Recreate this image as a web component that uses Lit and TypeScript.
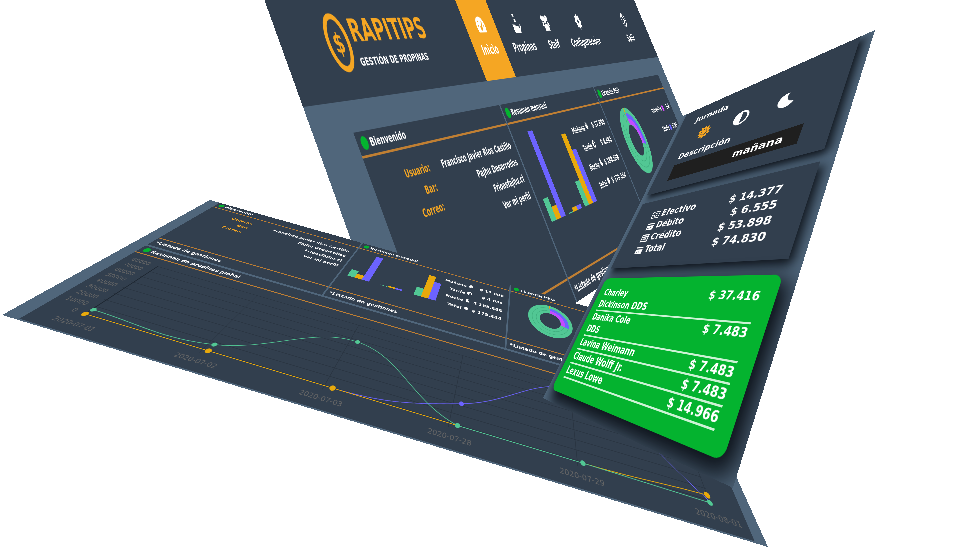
import { LitElement, html, svg, css } from "lit";
import { customElement, state } from "lit/decorators.js";

type Point = [number, number];
interface Placement {
  /** source area: x, y, width, height */
  area: [number, number, number, number];
  /** where its corners land on the scene, clockwise from top left */
  corners: [Point, Point, Point, Point];
}

const SCENE_WIDTH = 953;

/** Perspective matrix that carries a source rectangle onto four scene points. */
function project({ area, corners }: Placement, scale: number): string {
  const [rx, ry, rw, rh] = area;
  const [[x0, y0], [x1, y1], [x2, y2], [x3, y3]] = corners.map(
    ([x, y]) => [x * scale, y * scale] as Point
  );
  const dx1 = x1 - x2, dx2 = x3 - x2, sx = x0 - x1 + x2 - x3;
  const dy1 = y1 - y2, dy2 = y3 - y2, sy = y0 - y1 + y2 - y3;
  const den = dx1 * dy2 - dx2 * dy1;
  const g = (sx * dy2 - dx2 * sy) / den;
  const h = (dx1 * sy - sx * dy1) / den;
  const row = (p: number, q: number, r: number) => [
    p / rw,
    q / rh,
    r - (p * rx) / rw - (q * ry) / rh,
  ];
  const X = row(x1 - x0 + g * x1, x3 - x0 + h * x3, x0);
  const Y = row(y1 - y0 + g * y1, y3 - y0 + h * y3, y0);
  const W = row(g, h, 1);
  const m = [X[0], Y[0], 0, W[0], X[1], Y[1], 0, W[1], 0, 0, 1, 0, X[2], Y[2], 0, W[2]];
  return `matrix3d(${m.map((n) => n / W[2]).map((n) => n.toFixed(10)).join(",")})`;
}

const DESKTOP: Placement = {
  area: [0, 200, 2000, 400],
  corners: [[303, 107], [658, 57], [713, 188], [400, 376]],
};
const REPORT: Placement = {
  area: [0, 0, 2000, 740],
  corners: [[210, 200], [670, 330], [768, 547], [2, 315]],
};
const TABLET: Placement = {
  area: [0, 0, 640, 1000],
  corners: [[683, 116], [875, 30], [733, 488], [543, 398]],
};

const rays = (r1: number, r2: number, count: number) =>
  Array.from({ length: count * 2 }, (_, i) => {
    const t = (i * Math.PI) / count;
    const r = i % 2 ? r1 : r2;
    return `${(12 + r * Math.sin(t)).toFixed(2)},${(12 - r * Math.cos(t)).toFixed(2)}`;
  }).join(" ");

const ICONS = {
  sun: svg`<polygon points=${rays(8, 12, 10)} fill="currentColor"/><circle cx="12" cy="12" r="5" fill="none" stroke="#323f4e" stroke-width="1"/>`,
  half: svg`<circle cx="12" cy="12" r="10" fill="none" stroke="currentColor" stroke-width="3"/><path d="M12 2a10 10 0 0 0 0 20z" fill="currentColor"/>`,
  moon: svg`<path d="M14 1a11 11 0 1 0 9 15A10 10 0 0 1 14 1z" fill="currentColor"/>`,
  disc: svg`<circle cx="12" cy="12" r="9" fill="currentColor"/>`,
  gauge: svg`<path d="M12 2C5 2 0 7 0 14c0 3 1 5 2 7h20c1-2 2-4 2-7 0-7-5-12-12-12z" fill="currentColor"/><path d="M17 8l-5 8M4 13h2M7 7l1 2M18 13h2" stroke="#f5a623" stroke-width="2"/><circle cx="12" cy="16" r="3" fill="#f5a623"/>`,
  tips: svg`<path d="M9 0h5v3h-5zM10 6h5v4h-5z" fill="currentColor"/><path d="M0 13h6l4 2h6c2 0 2 3 0 3h3l4-5 2 2-6 9H0z" fill="currentColor"/>`,
  staff: svg`<circle cx="12" cy="8" r="5" fill="currentColor"/><circle cx="4" cy="6" r="4" fill="currentColor"/><circle cx="20" cy="6" r="4" fill="currentColor"/><path d="M4 23v-5c0-6 16-6 16 0v5zM0 17c0-7 4-7 6-6l-1 6zM24 17c0-7-4-7-6-6l1 6z" fill="currentColor"/>`,
  gear: svg`<polygon points=${rays(9, 12, 8)} fill="currentColor"/><circle cx="12" cy="12" r="3" fill="#323f4e"/>`,
  power: svg`<circle cx="12" cy="12" r="10" fill="none" stroke="currentColor" stroke-width="2"/><path d="M8 6l8 7-6 5M12 3v9" fill="none" stroke="currentColor" stroke-width="2"/>`,
  cash: svg`<rect x="1" y="4" width="22" height="16" fill="none" stroke="currentColor" stroke-width="2"/><circle cx="12" cy="12" r="4" fill="none" stroke="currentColor" stroke-width="2"/><path d="M4 12h2M18 12h2" stroke="currentColor" stroke-width="2"/>`,
  card: svg`<path d="M1 4h22v3H1zM1 10h22v11H1z" fill="currentColor"/><path d="M4 16h5M12 16h3" stroke="#323f4e" stroke-width="2"/>`,
  credit: svg`<path d="M2 4h20v16H2zM2 9h20M6 14h12" fill="none" stroke="currentColor" stroke-width="3"/>`,
};
type IconName = keyof typeof ICONS;
const icon = (name: IconName) =>
  html`<svg class="icon" viewBox="0 0 24 24" aria-hidden="true">${ICONS[name]}</svg>`;

const SHARED = css`
  * { box-sizing: border-box; margin: 0; padding: 0; }
  a { color: inherit; text-decoration: none; }
  .icon { display: inline-block; width: 1em; height: 1em; flex: none; }
  .card-title, .card-foot {
    font-size: 20px;
    font-weight: bold;
    white-space: nowrap;
    display: flex;
    align-items: center;
  }
  .card-title { height: 42px; padding-left: 12px; gap: 6px; border-bottom: 4px solid #c07f33; }
  .card-title::before {
    content: "";
    width: 22px;
    height: 22px;
    border-radius: 50%;
    background: #04b32f;
  }
  .card-foot { height: 48px; padding-left: 12px; border-top: 4px solid #c07f33; }
`;

const BARS = [
  [0.26, 0.15, 1],
  [0.01, 0.05, 0.05],
  [0.3, 0.87, 0.66],
];
const SHIFTS: [string, IconName, string][] = [
  ["Mañana", "sun", "$ 17.898"],
  ["Tarde", "half", "$ 4.684"],
  ["Noche", "moon", "$ 188.888"],
  ["Total", "disc", "$ 179.484"],
];

@customElement("summary-cards")
class SummaryCards extends LitElement {
  static styles = [
    SHARED,
    css`
      :host { display: block; color: #fff; }
      .row { display: grid; grid-template-columns: repeat(3, minmax(0, 1fr)); gap: 6px; height: 100%; }
      .card { background: #323f4e; display: flex; flex-direction: column; }
      .body { flex: 1; display: flex; justify-content: space-between; padding: 22px 20px 0 28px; font-size: 20px; white-space: nowrap; }
      .labels { color: #f5a623; text-align: right; font-weight: bold; line-height: 34px; width: 180px; list-style: none; }
      .values { text-align: right; line-height: 34px; list-style: none; font-weight: bold; }
      .chart { display: flex; align-items: flex-end; gap: var(--chart-gap, 20px); height: var(--chart, 164px); }
      .group { display: flex; align-items: flex-end; height: 100%; }
      .bar { width: 28px; }
      .bar:nth-child(1) { background: #52c794; }
      .bar:nth-child(2) { background: #e8a90c; }
      .bar:nth-child(3) { background: #6c63ff; }
      table { border-spacing: 0; height: 176px; font-weight: bold; }
      th, td { text-align: right; font-weight: bold; height: 44px; }
      td { padding-left: 12px; }
      .donut { width: 176px; height: 176px; margin-left: 44px; }
      .legend { height: 112px; }
      .users { color: #d64bff; }
      .staff { color: #6c63ff; }
    `,
  ];

  render() {
    return html`<div class="row">
      <article class="card">
        <h2 class="card-title">Bienvenido</h2>
        <div class="body">
          <ul class="labels"><li>Usuario:</li><li>Bar:</li><li>Correo:</li></ul>
          <ul class="values">
            <li>Francisco Javier Rios Castillo</li>
            <li>Pajhu Desarrollos</li>
            <li>Frioasfajhu.cl</li>
            <li><a href="#perfil">Ver mi perfil</a></li>
          </ul>
        </div>
        <p class="card-foot">*Listado de gestiones</p>
      </article>
      <article class="card">
        <h2 class="card-title">Resumen mensual</h2>
        <div class="body">
          <div class="chart">
            ${BARS.map(
              (g) => html`<div class="group">
                ${g.map((v) => html`<div class="bar" style="height:${v * 100}%"></div>`)}
              </div>`
            )}
          </div>
          <table>
            ${SHIFTS.map(
              ([n, i, v]) => html`<tr><th scope="row">${n} ${icon(i)}</th><td>${v}</td></tr>`
            )}
          </table>
        </div>
        <p class="card-foot">*Listado de gestiones</p>
      </article>
      <article class="card">
        <h2 class="card-title">Licencia PRO</h2>
        <div class="body">
          <svg class="donut" viewBox="-50 -50 100 100" fill="none">
            <circle r="36" stroke="#52c794" stroke-width="26" />
            <circle r="40" stroke="#3fae7e" stroke-width="1" />
            <circle r="31" stroke="#3fae7e" stroke-width="1" />
            <path d="M0 -36A36 36 0 0 1 35 9" stroke="#6c63ff" stroke-width="9" />
            <path d="M0 -28A28 28 0 0 1 27 7" stroke="#c44bff" stroke-width="9" />
            <path d="M0 -48V-40" stroke="#e8a90c" stroke-width="3" />
          </svg>
          <table class="legend">
            <tr><th scope="row">Usuarios <span class="users">■</span></th><td>1/2</td></tr>
            <tr><th scope="row">Staffs <span class="staff">■</span></th><td>5/30</td></tr>
          </table>
        </div>
        <p class="card-foot">*Listado de gestiones</p>
      </article>
    </div>`;
  }
}

const DATES = ["2020-07-01", "2020-07-02", "2020-07-03", "2020-07-28", "2020-07-29", "2020-08-01"];
const LEVELS = ["80000", "70000", "60000", "50000", "40000", "30000", "20000", "10000", "0"];
const MENU: [string, IconName][] = [
  ["Inicio", "gauge"],
  ["Propinas", "tips"],
  ["Staff", "staff"],
  ["Configuración▾", "gear"],
  ["Salir", "power"],
];
const PAYMENTS: [IconName, string, string][] = [
  ["cash", "Efectivo", "$ 14.377"],
  ["card", "Débito", "$ 6.555"],
  ["credit", "Crédito", "$ 53.898"],
  ["card", "Total", "$ 74.830"],
];
const TEAM = [
  ["Charley\nDickinson DDS", "$ 37.416"],
  ["Danika Cole\nDDS", "$ 7.483"],
  ["Lavina Weimann", "$ 7.483"],
  ["Claude Wolff Jr.", "$ 7.483"],
  ["Lexus Lowe", "$ 14.966"],
];
const JORNADAS: [string, IconName][] = [["mañana", "sun"], ["tarde", "half"], ["noche", "moon"]];

@customElement("app-root")
class AppRoot extends LitElement {
  @state() private scale = 1;
  @state() private jornada = "mañana";
  private observer = new ResizeObserver(([entry]) => {
    this.scale = entry.contentRect.width / SCENE_WIDTH;
  });

  connectedCallback() {
    super.connectedCallback();
    this.observer.observe(this);
  }
  disconnectedCallback() {
    super.disconnectedCallback();
    this.observer.disconnect();
  }

  static styles = [
    SHARED,
    css`
      :host { display: block; background: #fff; font-family: "DejaVu Sans", Verdana, sans-serif; color: #fff; }
      .scene { position: relative; width: 100%; aspect-ratio: 953 / 548; overflow: hidden; }
      .screen { position: absolute; top: 0; left: 0; transform-origin: 0 0; background: #50667b; overflow: hidden; }

      .desktop { width: 2000px; height: 652px; display: flex; flex-direction: column; }
      .top { height: 200px; background: #323f4e; display: grid; grid-template-columns: 700px minmax(0, 1fr); }
      .brand { display: flex; align-items: center; padding: 8px 0 0 136px; gap: 10px; }
      .coin { width: 75px; height: 102px; flex: none; }
      .coin text { font-size: 60px; font-weight: bold; }
      .brand h1 { font-size: 56px; line-height: 70px; color: #f5a623; }
      .brand p { font-size: 20px; line-height: 40px; font-weight: bold; white-space: nowrap; }
      .menu { display: grid; grid-template-columns: 158px 240px 140px 340px 1fr; }
      .menu a { display: flex; flex-direction: column; align-items: center; gap: 16px; padding-top: 60px; font-size: 28px; font-weight: bold; }
      .menu a:last-child { padding-left: 36px; }
      .menu .icon { width: 52px; height: 44px; }
      .menu .current { background: #f5a623; }
      .desktop summary-cards { flex: 1; padding: 51px 78px 0 116px; --chart: 182px; }

      .report { width: 2000px; height: 740px; display: grid; grid-template: 353px 1fr / minmax(0, 1fr); gap: 8px; padding: 0 30px 4px 44px; }
      .report summary-cards { --chart: 158px; --chart-gap: 44px; height: 353px; }
      .global { background: #323f4e; display: flex; flex-direction: column; }
      .plot { display: grid; grid-template-columns: 100px minmax(0, 1fr); padding-top: 18px; color: #666; font-size: 20px; }
      .levels { text-align: right; line-height: 29px; padding-right: 14px; list-style: none; }
      .lines { width: 100%; height: 261px; }
      .dates { grid-column: 2; display: grid; grid-template-columns: repeat(6, 346px); margin-left: -152px; padding-top: 12px; text-align: center; list-style: none; }

      .tablet { width: 640px; height: 1000px; display: flex; flex-direction: column; padding: 0 32px 28px 20px; gap: 33px; font-weight: bold; }
      .panel { background: #323f4e; box-shadow: 12px 14px 24px #10161e; }
      .shift { height: 345px; padding: 32px 76px 0 72px; }
      fieldset { border: 0; }
      .caption { font-size: 32px; line-height: 50px; display: block; }
      .choices { display: grid; grid-template-columns: repeat(3, 143px); margin: 24px 0; font-size: 56px; line-height: 0; }
      .choices label { display: flex; justify-content: center; }
      .choices input { position: absolute; opacity: 0; }
      .choices input:checked + .icon { color: #f5a623; }
      .field { display: block; width: 440px; height: 61px; margin-top: 8px; border: 0; background: #1f1f1f; color: #fff; font: bold 34px "DejaVu Sans", sans-serif; text-align: right; padding: 0 44px; }
      .pay { height: 231px; padding: 34px 70px 0 80px; font-size: 30px; }
      .pay table { width: 100%; border-spacing: 0; }
      .pay th, .pay td { height: 40px; line-height: 40px; padding: 0; }
      .pay .icon { margin-right: 8px; vertical-align: middle; width: 36px; height: 32px; }
      .left { text-align: left; }
      .right { text-align: right; }
      .team { flex: 1; background: #04b32f; border-radius: 20px; padding: 28px 35px 0 28px; box-shadow: 16px 18px 44px 8px #0b1017; font-size: 26px; list-style: none; }
      .team li { display: flex; justify-content: space-between; white-space: pre-line; line-height: 35px; border-bottom: 4px solid #cdf3d5; }
    `,
  ];

  render() {
    const s = this.scale;
    return html`<main class="scene">
      <section class="screen desktop" style="transform:${project(DESKTOP, s)}">
        <header class="top">
          <div class="brand">
            <svg class="coin" viewBox="0 0 96 130" aria-hidden="true">
              <ellipse cx="48" cy="65" rx="41" ry="58" fill="none" stroke="#f5a623" stroke-width="13" />
              <text x="48" y="87" text-anchor="middle" fill="#f5a623">$</text>
            </svg>
            <div>
              <h1>RAPITIPS</h1>
              <p>GESTIÓN DE PROPINAS</p>
            </div>
          </div>
          <nav class="menu">
            ${MENU.map(
              ([label, name], i) =>
                html`<a href="#${label}" class=${i ? "" : "current"}>${icon(name)}<span>${label}</span></a>`
            )}
          </nav>
        </header>
        <summary-cards></summary-cards>
      </section>

      <section class="screen report" style="transform:${project(REPORT, s)}">
        <summary-cards></summary-cards>
        <article class="global">
          <h2 class="card-title">Resumen de propinas global</h2>
          <div class="plot">
            <ul class="levels">${LEVELS.map((l) => html`<li>${l}</li>`)}</ul>
            <svg class="lines" viewBox="144 422 1826 261" fill="none" stroke-width="2">
              ${LEVELS.map((_, i) => svg`<path d="M150 ${437 + i * 29}H1890" stroke="#2a3542" stroke-width="2"/>`)}
              ${DATES.map((_, i) => svg`<path d="M${157 + i * 346} 437V683" stroke="#2a3542" stroke-width="2"/>`)}
              <path d="M157 437V680" stroke="#1d2630" stroke-width="3" />
              <path d="M872 671C1010 671 1080 652 1218 605S1420 450 1556 440S1750 560 1887 671" stroke="#6c63ff" />
              <path d="M157 671H1556C1690 671 1760 660 1887 657" stroke="#e8a90c" />
              <path d="M157 652C300 652 378 678 518 648S732 495 872 502S1080 640 1218 671H1556L1887 675" stroke="#52c794" />
              ${[157, 518, 872].map((x) => svg`<circle cx=${x} cy="671" r="8" fill="#e8a90c"/>`)}
              <circle cx="1887" cy="657" r="8" fill="#e8a90c" />
              <circle cx="1218" cy="605" r="7" fill="#6c63ff" />
              ${[[161, 652], [518, 648], [872, 502], [1218, 671], [1556, 671], [1887, 675]].map(
                ([x, y]) => svg`<circle cx=${x} cy=${y} r="7" fill="#52c794"/>`
              )}
            </svg>
            <ul class="dates">${DATES.map((d) => html`<li>${d}</li>`)}</ul>
          </div>
        </article>
      </section>

      <section class="screen tablet" style="transform:${project(TABLET, s)}">
        <div class="panel shift">
          <fieldset>
            <legend class="caption">Jornada</legend>
            <div class="choices">
              ${JORNADAS.map(
                ([name, i]) => html`<label aria-label=${name}>
                  <input
                    type="radio"
                    name="jornada"
                    .checked=${this.jornada === name}
                    @change=${() => (this.jornada = name)}
                  />${icon(i)}</label>`
              )}
            </div>
          </fieldset>
          <label class="caption" for="descripcion">Descripción</label>
          <input class="field" id="descripcion" .value=${this.jornada} />
        </div>
        <div class="panel pay">
          <table>
            ${PAYMENTS.map(
              ([i, n, v]) =>
                html`<tr><th class="left" scope="row">${icon(i)}${n}</th><td class="right">${v}</td></tr>`
            )}
          </table>
        </div>
        <ul class="team">
          ${TEAM.map(([n, v]) => html`<li><span>${n}</span><span>${v}</span></li>`)}
        </ul>
      </section>
    </main>`;
  }
}
